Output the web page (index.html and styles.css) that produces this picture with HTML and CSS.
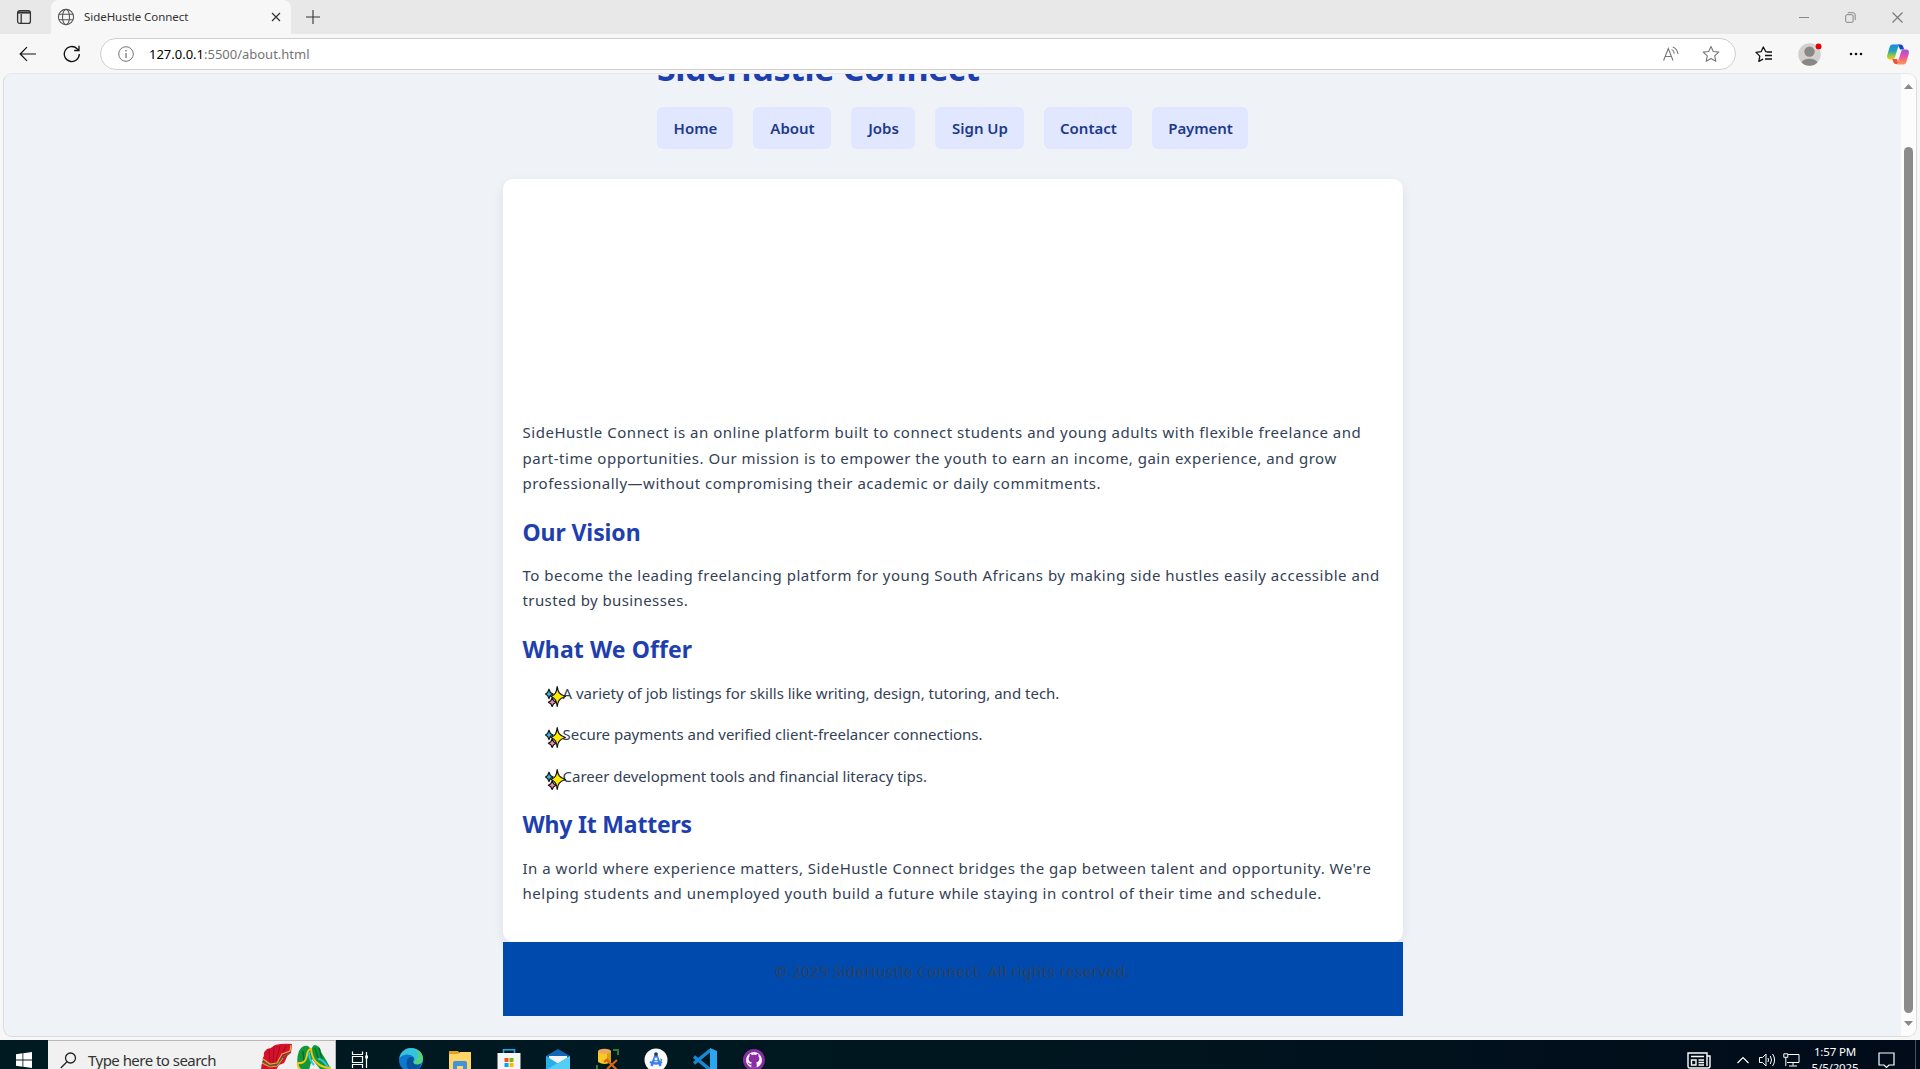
FILE: index.html
```
<!DOCTYPE html>
<html lang="en">
<head>
<meta charset="utf-8">
<title>SideHustle Connect</title>
<link rel="stylesheet" href="styles.css">
</head>
<body>
<svg class="defs" width="0" height="0">
  <defs>
    <symbol id="sparkles" viewBox="0 0 21 21">
      <g stroke="#111" stroke-width="1.2" stroke-linejoin="round">
        <path fill="#35b8e0" d="M4 3.2 5.400 6.4 8 8 5.400 9.600 4 12.600 2.600 9.600.6 8 2.600 6.4z"/>
        <path fill="#f28cb8" d="M7.200 11.800 8.600 14.800 11.300 16.300 8.600 17.800 7.200 20.400 5.800 17.800 3.400 16.300 5.800 14.800z"/>
        <path fill="#ffeb00" d="M12.200.7C13 6.300 14.200 8.600 20.400 10.500 14.200 12.400 13 14.700 12.200 20.300 11.400 14.700 10.600 12.400 6 10.500 10.600 8.600 11.400 6.300 12.200.7z"/>
      </g>
    </symbol>
  </defs>
</svg>

<div class="tabstrip">
  <svg class="tab-actions" width="16" height="16" viewBox="0 0 16 16" fill="none" stroke="#333" stroke-width="1.3"><rect x="1.6" y="1.6" width="12.8" height="12.8" rx="2.2"/><path d="M2 3.500h12" stroke-width="2.200"/><path d="M5.2 5v9"/></svg>
  <div class="tab">
    <svg width="18" height="18" viewBox="0 0 18 18" fill="none" stroke="#555" stroke-width="1.1"><circle cx="9" cy="9" r="7.6"/><ellipse cx="9" cy="9" rx="3.5" ry="7.6"/><path d="M2 6.3h14M2 11.7h14"/></svg>
    <span class="tab-title">SideHustle Connect</span>
    <svg class="tab-close" width="10" height="10" viewBox="0 0 10 10" stroke="#333" stroke-width="1.2"><path d="M1 1l8 8M9 1 1 9"/></svg>
  </div>
  <svg class="tab-new" width="14" height="14" viewBox="0 0 14 14" stroke="#333" stroke-width="1.1"><path d="M7 0v14M0 7h14"/></svg>
  <div class="window-buttons">
    <svg width="10" height="10" viewBox="0 0 10 10" stroke="#888"><path d="M0 5.5h10"/></svg>
    <svg width="11" height="11" viewBox="0 0 11 11" fill="none" stroke="#888"><rect x=".7" y="2.7" width="7.4" height="7.6" rx="1.2"/><path d="M2.8.7h5a2.3 2.3 0 0 1 2.4 2.3v5"/></svg>
    <svg width="11" height="11" viewBox="0 0 11 11" stroke="#777" stroke-width="1.1"><path d="M.5.5l10 10M10.500.5l-10 10"/></svg>
  </div>
</div>

<div class="toolbar">
  <svg class="back" width="18" height="16" viewBox="0 0 18 16" fill="none" stroke="#111" stroke-width="1.2"><path d="M8 1.200 1.200 8 8 14.800M1.200 8H17"/></svg>
  <svg class="reload" width="18" height="18" viewBox="0 0 18 18" fill="none" stroke="#111" stroke-width="1.300"><path d="M16.300 9A7.500 7.500 0 1 1 14.100 3.700L16 5.300M16 .8v4.700h-4.800"/></svg>
  <div class="address">
    <svg width="16" height="16" viewBox="0 0 16 16" fill="none" stroke="#757575"><circle cx="8" cy="8" r="7.300"/><path d="M8 7v5M8 4v1.500" stroke-width="1.300"/></svg>
    <span class="url"><b>127.0.0.1</b>:5500/about.html</span>
    <svg class="read-aloud" width="16" height="16" viewBox="0 0 16 16" fill="none" stroke="#777" stroke-width="1.100"><path d="M.6 14.500 5.300 2.500l4.700 12M2.200 10.500h6.200M8.600 3.400q2.500 1.500 2.700 4.200M9.800 1q4.600 2 5.200 7"/></svg>
    <svg width="18" height="18" viewBox="0 0 18 18" fill="none" stroke="#777" stroke-width="1.100" stroke-linejoin="round"><path d="M9 1.500l2.300 5 5.500.6-4.100 3.700 1.100 5.400L9 13.500l-4.800 2.700 1.100-5.400L1.200 7.100l5.500-.6z"/></svg>
  </div>
  <svg class="favorites" width="18" height="17" viewBox="0 0 18 17" fill="none" stroke="#111" stroke-width="1.300" stroke-linejoin="round"><path d="M12.500 5.900l-1.700-.2L8.300 1 6.100 5.700 1 6.400l3.800 3.700-1 5.300 4.300-2.200M10 9.500h7M10 13h7M12 6h5"/></svg>
  <svg class="profile" width="24" height="24" viewBox="0 0 24 24"><circle cx="11.500" cy="12.500" r="11.200" fill="#d2d0ce"/><circle cx="11.500" cy="9.600" r="5.200" fill="#8a8886"/><path fill="#8a8886" d="M3.600 20.500C5.500 15.500 17.500 15.500 19.400 20.500a11.200 11.200 0 0 1-15.800 0z"/><circle cx="20.500" cy="4.500" r="3.800" fill="#f7f7f7"/><circle cx="20.500" cy="4.500" r="3" fill="#e60000"/></svg>
  <svg class="more" width="14" height="4" viewBox="0 0 14 4" fill="#111"><circle cx="2" cy="2" r="1.300"/><circle cx="7" cy="2" r="1.300"/><circle cx="12" cy="2" r="1.300"/></svg>
  <svg class="copilot" width="22" height="21" viewBox="0 0 22 21">
    <defs>
      <linearGradient id="ca" x2="0" y2="1"><stop stop-color="#1688ec"/><stop offset=".45" stop-color="#25a7b5"/><stop offset=".75" stop-color="#9bc83c"/><stop offset="1" stop-color="#f6c915"/></linearGradient>
      <linearGradient id="cb" x2="0" y2="1"><stop stop-color="#a050e0"/><stop offset=".5" stop-color="#ec569c"/><stop offset="1" stop-color="#ff9a48"/></linearGradient>
    </defs>
    <path fill="#1745c8" d="M11 .5h2.500c2 0 2.600 1.500 3 3l.6 2h-4z"/>
    <path fill="#f0503c" d="M5 15h5l1.500 5H9c-2 0-2.600-1.500-3-3z"/>
    <path fill="url(#ca)" d="M5.500.5h7.300c-1 .5-1.500 2-2 3.500L8 13c-.6 1.700-1.200 2.500-3 2.500H2.500C.4 15.500-.3 13.500.3 11L2.500 3.500C3.100 1.500 3.800.5 5.500.5z"/>
    <path fill="url(#cb)" d="M16.500 20.500H9.200c1-.5 1.500-2 2-3.500L14 8c.6-1.700 1.200-2.500 3-2.500h2.500c2.100 0 2.800 2 2.200 4.500l-2.200 7.500c-.6 2-1.300 3-3 3z"/>
  </svg>
</div>

<div class="viewport">
  <div class="page">
    <header>
      <h1>SideHustle Connect</h1>
      <nav>
        <a class="home">Home</a><a class="about">About</a><a class="jobs">Jobs</a><a class="signup">Sign Up</a><a class="contact">Contact</a><a class="payment">Payment</a>
      </nav>
    </header>
    <main class="card">
      <p><span class="wide">SideHustle Connect is an online platform built to connect students and young adults with flexible freelance and</span><br>part-time opportunities. Our mission is to empower the youth to earn an income, gain experience, and grow<br><span class="tight">professionally—without compromising their academic or daily commitments.</span></p>
      <h2>Our Vision</h2>
      <p>To become the leading freelancing platform for young South Africans by making side hustles easily accessible and<br><span class="tighter">trusted by businesses.</span></p>
      <h2 class="offer">What We Offer</h2>
      <ul>
        <li><svg><use href="#sparkles"/></svg>A variety of job listings for skills like writing, design, tutoring, and tech.</li>
        <li><svg><use href="#sparkles"/></svg>Secure payments and verified client-freelancer connections.</li>
        <li><svg><use href="#sparkles"/></svg>Career development tools and financial literacy tips.</li>
      </ul>
      <h2 class="why">Why It Matters</h2>
      <p>In a world where experience matters, SideHustle Connect bridges the gap between talent and opportunity. We're<br><span class="wide">helping students and unemployed youth build a future while staying in control of their time and schedule.</span></p>
    </main>
    <footer><p>© 2025 SideHustle Connect. All rights reserved.</p></footer>
  </div>
  <div class="scrollbar">
    <svg width="9" height="5" viewBox="0 0 9 5" fill="#888"><path d="M0 5 4.500 0 9 5z"/></svg>
    <i></i>
    <svg width="9" height="5" viewBox="0 0 9 5" fill="#888"><path d="M0 0h9L4.500 5z"/></svg>
  </div>
</div>

<div class="taskbar">
  <div class="start"><svg width="16" height="16" viewBox="0 0 16 16" fill="#fff"><path d="M0 2.200 6.500 1.300v6.300H0zM7.300 1.200 16 0v7.600H7.300zM0 8.400h6.500v6.300L0 13.800zM7.300 8.400H16V16l-8.700-1.200z"/></svg></div>
  <div class="search">
    <svg width="17" height="17" viewBox="0 0 17 17" fill="none" stroke="#222" stroke-width="1.300"><circle cx="10.500" cy="6" r="5"/><path d="M7 9.800.8 16"/></svg>
    <span>Type here to search</span>
    <svg class="fabrics" width="72" height="27" viewBox="0 0 72 27">
      <path fill="#d5122b" d="M7 6Q12 5 15 2q8-2 17-1l-1 9q-4 2-5 6l-2 4-5 2-3 5H1q0-6 2-9-1-3 1-5-1-4 3-7z"/>
      <path fill="none" stroke="#a90720" d="M9 6l1 13M14 4l-1 16M20 3l-4 15M26 3l-7 15"/>
      <path fill="none" stroke="#d9b43a" stroke-width="1.200" d="M3 16l7 5 7-1 5-9 8-3 1-6M2 20l8 4 7-1 6-8"/>
      <path fill="none" stroke="#258447" d="M2 18l8 5 7-1 6-8 7-4"/>
      <path fill="#11983b" d="M39 8q3-6 9-5l3 3 3-4q6 0 7 7l5 8 5 9H60l-8-10-3 11H40q-5-8-1-19z"/>
      <path fill="none" stroke="#04712a" stroke-width="1.500" d="M43 8l1 12M55 5l3 10M59 5l3 11"/>
      <path fill="none" stroke="#f4c518" stroke-width="2" d="M38 20q8 1 9-8 1-6 4-6 1 9 5 13 6 6 15 6M38 20q-1 4 3 7"/>
      <path fill="none" stroke="#27c8e8" stroke-width="2" d="M49 9q0 8 5 13M58 16q4-1 10 8"/>
    </svg>
  </div>
  <div class="apps">
    <svg class="task-view" viewBox="0 0 24 24" fill="none" stroke="#fff" stroke-width="1.200"><path d="M4.500 3.500v3h10v-3M4.500 20v-3.500h10V20M4.500 8.500h10v6h-10zM18.500 4v16"/><path d="M17.300 9h2.700" stroke-width="3"/></svg>
    <svg viewBox="0 0 24 24"><circle cx="12" cy="12" r="12" fill="#0c79cf"/><path fill="#36c4dd" d="M.4 10C2 3 7 0 12 0c8 0 12 6 12 10.500 0 4-3 6-6 6-4 0-4.500-2-3-3.500 2-4-3-7-8-6.500Q2.500 7 .4 10z"/><path fill="#63d852" d="M16 1c7 2.500 8 7 8 10 0 4-3 5.500-6 5.500-4 0-4.500-2-3-3.500 5-1 6-7 1-12z" opacity=".7"/><path fill="#07529d" d="M8 12c1-3 5-4 7-1.500 0 2-2 3 0 5 2 2 6 1 7.500 0C20 21 16 24 12 23.500 8 21 7 16 8 12z"/></svg>
    <svg viewBox="0 0 24 24"><path fill="#e4a11b" d="M1 3h9l2 3v5H1z"/><path fill="#ffd568" d="M1 6h9l2-2h11v18H1z"/><path fill="#3f95d9" d="M5 15q0-2 2-2h10q2 0 2 2v8h-4v-5H9v5H5z"/></svg>
    <svg viewBox="0 0 24 24"><path fill="none" stroke="#1eaaf0" stroke-width="1.600" d="M6.500 6V1.800h11V6"/><path fill="#f5f5f5" d="M.5 5h23v19H.5z"/><path fill="#f25022" d="M7.500 10h4v4h-4z"/><path fill="#7fba00" d="M12.500 10h4v4h-4z"/><path fill="#00a4ef" d="M7.500 15h4v4h-4z"/><path fill="#ffb900" d="M12.500 15h4v4h-4z"/></svg>
    <svg viewBox="0 0 24 24"><path fill="#1067b8" d="M0 8 12 1l12 7v8H0z"/><path fill="#f3f3f3" d="M3 8h18v6l-9 5-9-5z"/><path fill="#29aee8" d="M0 8l12 7.500L24 8v14H0z"/><path fill="#55cef5" d="M0 22 24 8v14z"/></svg>
    <svg viewBox="0 0 24 24"><path fill="#f7c928" d="M3 3h13v11q-6.500 4-13 0z"/><path fill="#d8a00c" d="M12 4h4v10l-4 1z"/><ellipse cx="9.500" cy="3.300" rx="6.500" ry="2.600" fill="#efa75c"/><path fill="none" stroke="#387a37" stroke-width="2" d="M18 2h5v5M2 17v5h5"/><path fill="none" stroke="#d9670d" stroke-width="2.200" d="M12 21l10-9M12 12l10 10M9 14l4-3"/></svg>
    <svg viewBox="0 0 24 24"><circle cx="12" cy="12" r="11.500" fill="#f7f9fa"/><path fill="none" stroke="#3c7cf2" stroke-width="2.300" d="M12 6 7.500 18M12 6l4.500 12M6 14q6 3 12 0"/><circle cx="12" cy="6" r="1.800" fill="#26374a"/><circle cx="12" cy="11" r="2" fill="#fff" stroke="#3c7cf2"/><path fill="#32a853" d="M16.500 10l2 2-2 2z"/></svg>
    <svg viewBox="0 0 24 24"><path fill="none" stroke="#168ad4" stroke-width="3.400" d="M1 8.500 17.500 22M1 15.500 17.500 2"/><path fill="#2ba7f0" d="M17 0l7 3v18l-7 3z"/></svg>
    <svg viewBox="0 0 24 24"><circle cx="12" cy="12" r="11" fill="#8a2da5"/><path fill="#fff" d="M12 4a8 8 0 0 0-2.700 15.500v-2.600c-3 .5-3-2-4-2.300 1.500-.5 2 1.700 4 1.200.1-.6.3-1 .6-1.300z"/><path fill="#fff" d="M12 4a8 8 0 0 1 2.700 15.500l-5.400-.1.200-5z"/><path fill="#8a2da5" d="M9.900 14.500c-3.500-.6-4.100-4.500-2.300-6.200-.3-1 0-2 .2-2.400 1 0 1.800.6 2.400 1 1.200-.3 2.400-.3 3.600 0 .6-.4 1.400-1 2.400-1 .2.400.5 1.400.2 2.400 1.800 1.700 1.200 5.600-2.300 6.200.4.400.6 1 .6 1.800v3.400H9.300v-3.400c0-.8.200-1.400.6-1.800z"/></svg>
  </div>
  <div class="tray">
    <svg class="news" width="24" height="17" viewBox="0 0 24 17" fill="none" stroke="#fff" stroke-width="1.400"><path d="M20 4h3v10q0 2-2 2H3q-2 0-2-2V1h19v13M4 4.500h13M11.500 8H17M11.500 10.500H17M11.500 13H17M4.500 8h4.500v5H4.500z"/></svg>
    <svg class="chevron" width="12" height="8" viewBox="0 0 12 8" fill="none" stroke="#fff" stroke-width="1.200"><path d="M.5 7 6 1.500 11.500 7"/></svg>
    <svg class="sound" width="17" height="14" viewBox="0 0 17 14" fill="none" stroke="#fff"><path d="M.5 4.500h3L7 1v12L3.500 9.500h-3zM9 5q1 2 0 4M11.300 3q2.400 4 0 8M13.600 1q4 6 0 12"/></svg>
    <svg class="network" width="17" height="14" viewBox="0 0 17 14" fill="none" stroke="#fff"><path d="M5 1.500h11v8H4M10 9.500v3M6 13h8M.8.8h4v3.500h-4zM2.800 4.500V13"/></svg>
    <div class="clock"><span>1:57 PM</span><span>5/5/2025</span></div>
    <svg class="notice" width="17" height="17" viewBox="0 0 17 17" fill="none" stroke="#fff" stroke-width="1.200"><path d="M1 1h15v12h-5l-2.500 2.500L6 13H1z"/></svg>
    <i></i>
  </div>
</div>
</body>
</html>
```
FILE: styles.css
```
* { box-sizing: border-box; }
body {
  margin: 0;
  width: 1920px;
  height: 1069px;
  overflow: hidden;
  display: flex;
  flex-direction: column;
  background: #f7f7f7;
  font-family: "Noto Sans", "Open Sans", sans-serif;
  font-size: 15px;
}
svg { display: block; flex: none; }
.defs { position: absolute; }

/* Tab strip */
.tabstrip { height: 34px; flex: none; display: flex; align-items: center; background: #e8e8e8; }
.tab-actions { margin-left: 16px; }
.tab {
  width: 240px;
  height: 34px;
  margin-left: 19px;
  padding: 0 10px 0 6px;
  display: flex;
  align-items: center;
  background: #f7f7f7;
  border-radius: 8px 8px 0 0;
}
.tab-title { margin-left: 9px; padding-bottom: 1px; font-size: 11.5px; letter-spacing: -0.05px; color: #333; white-space: nowrap; }
.tab-close { margin-left: auto; }
.tab-new { margin-left: 15px; }
.window-buttons { margin-left: auto; margin-right: 17px; display: flex; align-items: center; gap: 36px; }

/* Toolbar */
.toolbar { height: 39px; padding-top: 1px; flex: none; display: flex; align-items: center; }
.back { margin-left: 19px; }
.reload { margin-left: 26px; }
.address {
  width: 1636px;
  height: 32px;
  margin-left: 19px;
  padding: 0 15px 0 17px;
  display: flex;
  align-items: center;
  background: #fff;
  border: 1px solid #cfcfcf;
  border-radius: 16px;
}
.url { margin-left: 15px; font-size: 13px; color: #757575; letter-spacing: -0.01px; }
.url b { font-weight: 400; color: #000; }
.read-aloud { margin-left: auto; margin-right: 23px; }
.favorites { margin-left: 19px; }
.profile { margin-left: 25px; }
.more { margin-left: 27px; }
.copilot { margin-left: 24px; }

/* Web page area */
.viewport {
  height: 964px;
  flex: none;
  margin: 0 3px;
  display: flex;
  overflow: hidden;
  background: #eff3f8;
  border: 1px solid #dcdcdc;
  border-top-color: #e8e8e8;
  border-radius: 9px;
}
.page { width: 1897px; display: flex; flex-direction: column; align-items: center; }
header { width: 591px; margin-top: -34.500px; flex: none; }
h1, h2 { color: #1e40af; font-weight: 700; margin: 0; }
h1 { font-size: 34px; line-height: 56px; letter-spacing: -0.4px; }
nav { display: flex; gap: 20px; margin-top: 11.500px; }
nav a {
  height: 42px;
  padding-left: 1px;
  line-height: 42px;
  text-align: center;
  border-radius: 6px;
  background: #e0e7ff;
  color: #1e3a8a;
  font-weight: 600;
}
.home { width: 76px; }
.about { width: 78px; }
.jobs { width: 64px; }
.signup { width: 89px; }
.contact { width: 88px; }
.payment { width: 96px; letter-spacing: -0.100px; }

.card {
  width: 900px;
  height: 763px;
  flex: none;
  margin-top: 30px;
  padding: 241px 0 0 20px;
  background: #fff;
  border-radius: 10px;
  box-shadow: 0 4px 12px rgba(0, 0, 0, 0.08);
}
p {
  margin: 0;
  color: #334155;
  line-height: 25.600px;
  letter-spacing: 0.508px;
  white-space: nowrap;
}
.wide { letter-spacing: 0.522px; }
.tight { letter-spacing: 0.494px; }
.tighter { letter-spacing: 0.400px; }
h2 { font-size: 23px; line-height: 38.400px; margin: 16px 0 11.500px; letter-spacing: -0.100px; }
.offer { margin-bottom: 12.500px; letter-spacing: 0.100px; }
.why { margin-bottom: 12px; letter-spacing: -0.200px; }
ul { margin: 0; padding: 0 0 0 40px; list-style: none; }
li {
  position: relative;
  line-height: 25.600px;
  margin-bottom: 15.800px;
  color: #334155;
}
li svg { position: absolute; left: -18px; top: 5px; width: 21px; height: 21px; }

footer { width: 900px; height: 74px; flex: none; padding-top: 17px; background: #004aad; text-align: center; position: relative; }

.scrollbar {
  width: 15px;
  padding: 10px 0 9px;
  display: flex;
  flex-direction: column;
  align-items: center;
  background: #fcfcfc;
}
.scrollbar i { width: 9px; height: 866px; margin: 58px 0 8px; border-radius: 5px; background: #8b8b8b; }

/* Taskbar: its lower part runs past the screen edge */
.taskbar {
  height: 40px;
  flex: none;
  margin-top: 3px;
  display: flex;
  background: linear-gradient(90deg, #001a22, #001720 50%, #010b19);
}
.start { width: 48px; display: flex; align-items: center; justify-content: center; }
.search {
  width: 288px;
  padding-left: 12px;
  display: flex;
  align-items: center;
  background: #f1f1f1;
  border-top: 1px solid #b8b8b8;
  border-right: 1px solid #b8b8b8;
  color: #333;
}
.search span { margin-left: 11px; padding-bottom: 1px; width: 128px; letter-spacing: -0.530px; white-space: nowrap; }
.fabrics { align-self: flex-start; margin: 2px 0 0 44px; }
.apps { display: flex; align-items: center; gap: 25px; margin-left: 12px; }
.apps svg { width: 24px; height: 24px; }
.apps .task-view { margin-right: 2px; }
.tray { margin-left: auto; display: flex; align-items: center; }
.chevron { margin-left: 26px; }
.sound { margin-left: 10px; }
.network { margin-left: 7px; }
.clock {
  width: 60px;
  margin-left: 5px;
  margin-top: -1px;
  display: flex;
  flex-direction: column;
  align-items: center;
  font-size: 11.500px;
  line-height: 16px;
  letter-spacing: -0.150px;
  color: #fff;
}
.notice { margin-left: 13px; }
.tray i { width: 1px; height: 40px; margin: 0 4px 0 20px; background: #4a525c; }
```
